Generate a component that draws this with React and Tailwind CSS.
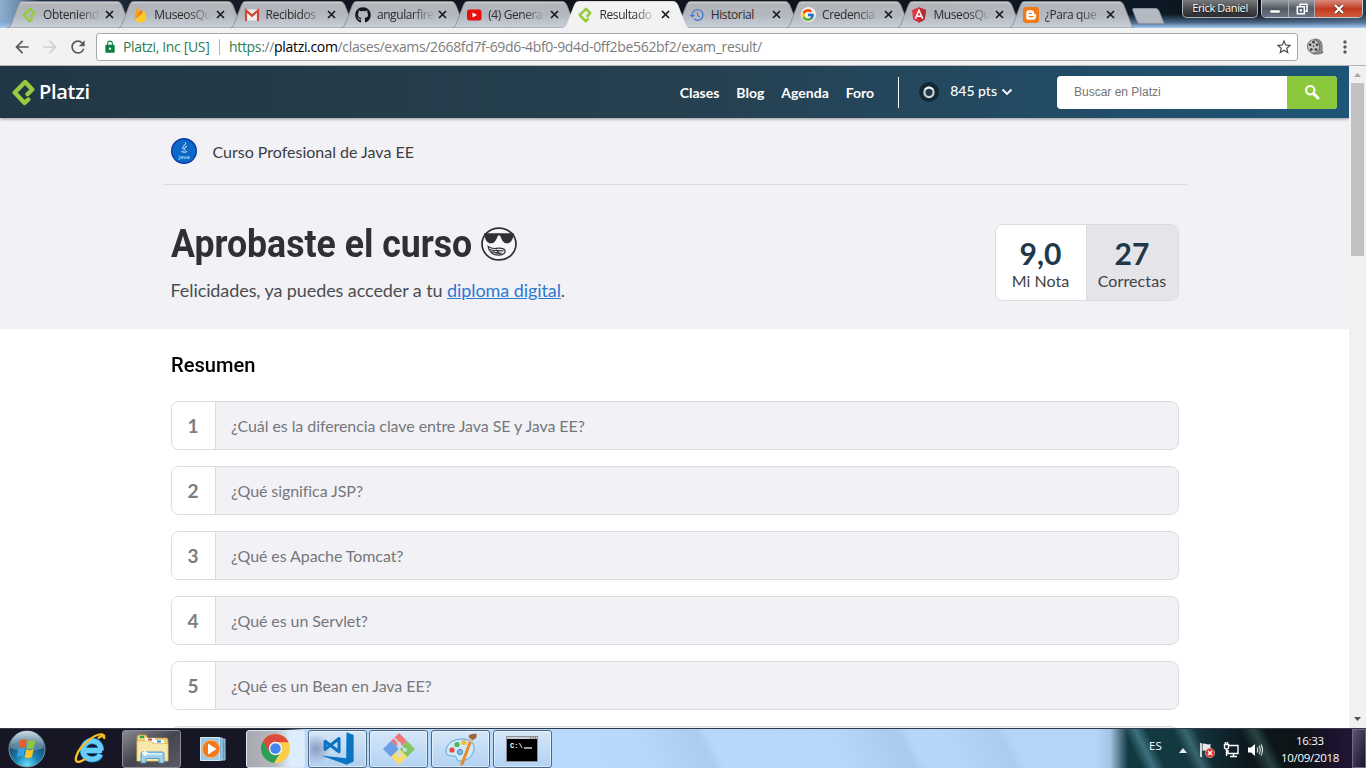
import React from "react";
import { FcGoogle } from "react-icons/fc";
import { FaGithub } from "react-icons/fa";
import { MdHistory, MdArrowBack, MdArrowForward, MdRefresh, MdLock, MdStarBorder, MdMoreVert } from "react-icons/md";

const PlatziMark = ({ className }) => (
  <svg viewBox="0 0 68 80" className={className} fill="none" stroke="#98ca3f" strokeWidth="13" strokeLinecap="round" strokeLinejoin="round">
    <path d="M46 45 60 31 39 9 8 40 37 71 48 61" />
  </svg>
);

const Firebase = () => (
  <svg viewBox="0 0 16 16" className="size-4">
    <path d="M2.5 13 5 .8c.1-.5.6-.5.8-.1l1.800 3.400z" fill="#ffa000" />
    <path d="M2.500 13 8.700 3.200c.2-.4.6-.4.8 0l1.500 2.800z" fill="#f57c00" />
    <path d="m2.500 13 9.600-8.600c.3-.3.7-.2.8.2L14.500 13l-5.500 2.800c-.4.2-.8.2-1.200 0z" fill="#ffca28" />
  </svg>
);

const Gmail = () => (
  <svg viewBox="0 0 16 16" className="size-4">
    <path d="M1 2.500h14v11H1z" fill="#f1eeee" />
    <path d="M2 14V3.500l6 5.200 6-5.200V14" fill="none" stroke="#d14836" strokeWidth="2.200" />
  </svg>
);

const Youtube = () => (
  <svg viewBox="0 0 16 16" className="size-4">
    <rect x="1" y="2.500" width="14.500" height="11" rx="2.500" fill="#e80f0f" />
    <path d="m6.500 5.500 4.500 2.500-4.500 2.500z" fill="#fff" />
  </svg>
);

const Angular = () => (
  <svg viewBox="0 0 16 16" className="size-4">
    <path d="M8 .3 15 3l-1.200 9.500L8 15.800l-5.800-3.300L1 3z" fill="#dd3545" />
    <path d="M8 .3V15.800l5.800-3.300L15 3z" fill="#b52e31" />
    <path d="M4.300 11.700 8 3.300l3.700 8.400M5.800 9.300h4.400" fill="none" stroke="#fff" strokeWidth="1.500" />
  </svg>
);

const Blogger = () => (
  <svg viewBox="0 0 16 16" className="size-4">
    <rect width="16" height="16" rx="3" fill="#ef7a1a" />
    <path d="M6 3.300h2.500c1.600 0 2.600 1 2.600 2.600 0 1.300 1.800.5 1.800 1.700V10c0 1.700-1.100 2.800-2.800 2.800H6A2.700 2.700 0 0 1 3.200 10V6A2.700 2.700 0 0 1 6 3.300z" fill="#fff" />
    <path d="M6.200 6.300h2M6.200 9.700h3.600" stroke="#ef7a1a" strokeWidth="1.300" strokeLinecap="round" />
  </svg>
);

const Close = () => (
  <svg viewBox="0 0 9 9" className="size-[9px] shrink-0">
    <path d="m1 1 7 7M8 1 1 8" stroke="#1b1b1b" strokeWidth="1.700" />
  </svg>
);

const tabs = [
  { title: "Obteniend", icon: <PlatziMark className="h-4 w-4" /> },
  { title: "MuseosQu", icon: <Firebase /> },
  { title: "Recibidos", icon: <Gmail /> },
  { title: "angularfire", icon: <FaGithub className="size-4 text-[#15171b]" /> },
  { title: "(4) Genera", icon: <Youtube /> },
  { title: "Resultado", icon: <PlatziMark className="h-4 w-4" />, active: true },
  { title: "Historial", icon: <MdHistory className="size-4 text-[#3f78c8]" />, whole: true },
  { title: "Credencia", icon: <span className="flex size-[15px] items-center justify-center rounded-full bg-[#eef0f2]"><FcGoogle className="size-[14px]" /></span> },
  { title: "MuseosQu", icon: <Angular /> },
  { title: "¿Para que", icon: <Blogger /> },
];

function Tab({ title, icon, active, whole }) {
  return (
    <div className={`relative -mr-[14px] h-[27px] w-[125.300px] shrink-0 ${active ? "z-10" : ""}`}>
      <svg viewBox="0 0 125 27" preserveAspectRatio="none" className="absolute inset-0 size-full">
        <defs>
          <linearGradient id="tabfill" x1="0" y1="0" x2="0" y2="1">
            <stop offset="0" stopColor="#b3b4b7" />
            <stop offset=".5" stopColor="#b3b7bf" />
            <stop offset="1" stopColor="#c9d0da" />
          </linearGradient>
        </defs>
        <path d="M0 27C3 26 3.500 25 4.500 22L11.500 4Q12.500.5 16 .5H110Q113 .5 114.500 4L121.500 22Q122.500 26 125 27Z" fill={active ? "#f2f2f2" : "url(#tabfill)"} stroke={active ? "#e8e8e8" : "#8b8f96"} strokeWidth=".9" />
        {!active && <path d="M13 1.700H112" stroke="#d0d1d3" strokeWidth="1" />}
      </svg>
      <div className="relative flex h-full items-center pl-[14px]">
        <span className="flex size-4 shrink-0 items-center justify-center">{icon}</span>
        <span className={`ml-[6px] flex w-[58px] shrink-0 whitespace-nowrap text-[12px] leading-[18px] tracking-[-0.4px] text-[#2c2c2c] ${whole ? "" : "[mask-image:linear-gradient(to_right,#000_60%,transparent_100%)]"}`}>{title}</span>
        <span className="ml-[3.500px] flex"><Close /></span>
      </div>
    </div>
  );
}

function WindowButtons() {
  return (
    <div className="absolute top-0 right-[3px] z-20 flex items-start gap-[3px]">
      <div className="flex h-[18px] w-[76px] items-center justify-center rounded-b-[5px] border border-t-0 border-[#aeb3ba] bg-linear-to-b from-[#77797d] via-[#4a4c50] to-[#2b2d30] text-[11px] tracking-[-0.35px] text-white [text-shadow:0_1px_2px_#000]">
        <span className="whitespace-nowrap">Erick Daniel</span>
      </div>
      <div className="flex h-[18px] overflow-hidden rounded-b-[5px] border border-t-0 border-[#c5cad2]">
        <div className="flex w-[27px] items-center justify-center border-r border-[#a5aab3] bg-linear-to-b from-[#9b9fa6] via-[#555b66] to-[#6c7685]">
          <svg viewBox="0 0 12 10" className="h-[10px] w-3"><path d="M1 6h10v3H1z" fill="#fff" stroke="#444" strokeWidth=".5" /></svg>
        </div>
        <div className="flex w-[26px] items-center justify-center border-r border-[#a5aab3] bg-linear-to-b from-[#9b9fa6] via-[#555b66] to-[#6c7685]">
          <svg viewBox="0 0 12 12" className="size-3" fill="none" stroke="#fff" strokeWidth="1.500"><path d="M4 3V1.300h7v7H9" /><path d="M1.300 3.800h7v7h-7z" /><path d="M4 6.600h1.600v1.500H4z" strokeWidth="1" /></svg>
        </div>
        <div className="flex w-[47px] items-center justify-center bg-linear-to-b from-[#d98a7c] via-[#c23a22] to-[#cf5a38]">
          <svg viewBox="0 0 12 10" className="h-[10px] w-3"><path d="m2 1 8 8M10 1 2 9" stroke="#5a2a22" strokeWidth="3.600" /><path d="m2 1 8 8M10 1 2 9" stroke="#fff" strokeWidth="2.400" /></svg>
        </div>
      </div>
    </div>
  );
}

function TabStrip() {
  return (
    <div className="relative flex h-7 items-end bg-[linear-gradient(to_bottom,transparent_50%,rgba(120,165,215,0.55)_80%,#a9cdf2),linear-gradient(to_right,#8fb0cf_0,#6d8db0_18px,#22303f_40px,#111722_20%,#10131c_60%,#0c1a26_83%,#0b1018_92%,#2b3a4c)] pl-[7px]">
      {tabs.map((t, i) => <Tab key={i} {...t} />)}
      <svg viewBox="0 0 34 16" className="mb-1 ml-[12px] h-4 w-[34px] shrink-0">
        <path d="M1.500 .5H24Q26 .5 27 3L32 15.500H8Q6 15.500 5 13L.8 2Q.4.5 1.500.5Z" fill="#b4bac4" stroke="#8d949f" />
      </svg>
      <WindowButtons />
    </div>
  );
}

const Reel = () => (
  <svg viewBox="0 0 18 18" className="h-[17px] w-[18px]">
    <path d="M9 1c5 0 7.500 3 7.500 7v5l1 2.500-4 1.500H7z" fill="#8d8d8d" stroke="#555" strokeWidth=".7" />
    <ellipse cx="7.500" cy="9" rx="6.500" ry="7.200" fill="#c4c4c4" stroke="#4a4a4a" strokeWidth=".8" />
    <g fill="#3c3c3c"><circle cx="7.500" cy="4.400" r="1.400" /><circle cx="3.800" cy="7.200" r="1.400" /><circle cx="11.200" cy="7.200" r="1.400" /><circle cx="5" cy="12.300" r="1.500" /><circle cx="10" cy="12.300" r="1.500" /><circle cx="7.500" cy="8.800" r=".8" /></g>
  </svg>
);

function Toolbar() {
  return (
    <div className="flex h-[38px] items-center border-b border-[#b6b4b6] bg-[#f2f2f2]">
      <MdArrowBack className="ml-[12px] size-5 text-[#5a5a5a]" />
      <MdArrowForward className="ml-2 size-5 text-[#d0d0d0]" />
      <MdRefresh className="ml-2 size-5 text-[#5a5a5a]" />
      <div className="ml-2 flex h-7 w-[1202px] items-center rounded-[3px] border border-[#a9a9a9] bg-white text-[14px]">
        <MdLock className="ml-[6px] size-[14px] text-[#0b8043]" />
        <span className="ml-[6px] w-[88px] whitespace-nowrap tracking-[-0.35px] text-[#2d7d50]">Platzi, Inc [US]</span>
        <span className="ml-[8px] h-4 w-px bg-[#b5b5b5]" />
        <span className="ml-[9px] whitespace-nowrap tracking-[-0.332px] text-[#7d7d7d]"><span className="text-[#2d7d50]">https</span>://<span className="text-black">platzi.com</span>/clases/exams/2668fd7f-69d6-4bf0-9d4d-0ff2be562bf2/exam_result/</span>
        <MdStarBorder className="mr-[4px] ml-auto size-[18px] text-[#4c4c4c]" />
      </div>
      <span className="ml-[8px]"><Reel /></span>
      <MdMoreVert className="ml-[11px] size-5 text-[#5a5a5a]" />
    </div>
  );
}

function SiteHeader() {
  return (
    <header className="relative z-10 flex h-[52px] shrink-0 items-center bg-linear-to-r from-[#213745] via-[#26404f] to-[#1c5577] font-[Lato,sans-serif] text-white shadow-[0_1px_3px_rgba(0,0,0,0.4)]">
      <PlatziMark className="ml-3 h-[27px] w-[23px]" />
      <span className="ml-1 font-['Open_Sans',sans-serif] text-[20px] leading-none font-semibold tracking-[-0.3px]">Platzi</span>
      <nav className="ml-auto flex items-center gap-[17px] pt-px text-[14px] leading-[18px] font-bold">
        {["Clases", "Blog", "Agenda", "Foro"].map((n) => <span key={n}>{n}</span>)}
      </nav>
      <span className="ml-6 h-[31px] w-px bg-white" />
      <svg viewBox="0 0 20 20" className="ml-5 size-5">
        <circle cx="10" cy="10" r="10" fill="#132735" />
        <ellipse cx="10" cy="10.300" rx="4.600" ry="4.800" fill="#22384a" stroke="#c3d6d4" strokeWidth="2.200" />
        <path d="M6 7.500q4-4 8 0" stroke="#eef3ee" strokeWidth="2" fill="none" />
      </svg>
      <span className="mb-[3px] ml-[11px] text-[14px] font-medium">845 pts</span>
      <svg viewBox="0 0 12 8" className="ml-1 h-2 w-3"><path d="m1.500 1.500 4.500 4.500 4.500-4.500" fill="none" stroke="#fff" strokeWidth="1.800" /></svg>
      <div className="mr-3 ml-[44px] flex h-[33px] w-[280px] overflow-hidden rounded-[4px] bg-white">
        <span className="flex-1 pl-[17px] font-['Liberation_Sans',sans-serif] text-[12px] leading-[32px] text-[#757575]">Buscar en Platzi</span>
        <span className="flex w-[50px] items-center justify-center bg-[#8bc83c]">
          <svg viewBox="0 0 16 16" className="size-4" fill="none" stroke="#fff"><circle cx="6.300" cy="6.200" r="4.200" strokeWidth="2.100" /><path d="m9.700 9.700 4.300 4.300" strokeWidth="3" strokeLinecap="round" /></svg>
        </span>
      </div>
    </header>
  );
}

const JavaBadge = () => (
  <svg viewBox="0 0 26 26" className="size-[26px]">
    <circle cx="13" cy="13" r="12.300" fill="#0c68c6" stroke="#0b3aa5" strokeWidth="1.400" />
    <path d="M14.500 4.500c1 2.500-4.500 4-2 7M16 8.300c-3.500 1.700-2.500 2.500-2 4M10.500 13.300c1.500 1.200 4 1 5.500.3" fill="none" stroke="#fff" strokeWidth="1" />
    <text x="13" y="20.500" textAnchor="middle" fontSize="6" fill="#dcecff" fontFamily="Open Sans, sans-serif">java</text>
  </svg>
);

const CoolFace = () => (
  <svg viewBox="0 0 106 100" className="h-[34px] w-[36px]">
    <ellipse cx="53" cy="50" rx="50" ry="47" fill="#f7f7fa" stroke="#2e3033" strokeWidth="5" />
    <path d="M9 18h88l-2 10c-3 13-9 20-18 20-10 0-15-8-20-21q-4-5-8 0C44 40 39 48 29 48c-9 0-16-7-18-20z" fill="#2e3033" />
    <path d="M21 57c7 5 14 7 22 6 12-2 27-1 28 7s-8 13-20 13c-17 0-28-11-30-26z" fill="none" stroke="#2e3033" strokeWidth="3.500" />
    <path d="M25 66c11 5 24 2 41 4M31 72c10 3 16 7 30 5M44 67l12 12" fill="none" stroke="#2e3033" strokeWidth="3.500" />
  </svg>
);

const questions = [
  "¿Cuál es la diferencia clave entre Java SE y Java EE?",
  "¿Qué significa JSP?",
  "¿Qué es Apache Tomcat?",
  "¿Qué es un Servlet?",
  "¿Qué es un Bean en Java EE?",
];

function Results() {
  return (
    <main className="flex-1 font-[Lato,sans-serif]">
      <section className="h-[211px] bg-[#f2f1f6]">
        <div className="mx-auto w-[1024px]">
          <div className="flex h-[67px] items-center border-b border-[#dcdbe0] px-2">
            <JavaBadge />
            <span className="mt-[2px] ml-4 text-[16px] text-[#3b3e42]">Curso Profesional de Java EE</span>
          </div>
          <div className="flex justify-between px-2 pt-[39px]">
            <div>
              <h1 className="flex h-[39px] items-center gap-[9px] font-[Roboto,sans-serif] text-[38px] leading-none font-bold text-[#2e3033]">
                <span className="w-[301px] whitespace-nowrap"><span className="inline-block origin-left scale-x-[0.938]">Aprobaste el curso</span></span>
                <CoolFace />
              </h1>
              <p className="mt-[14px] text-[18px] leading-[27px] tracking-[-0.085px] text-[#4a4d50]">Felicidades, ya puedes acceder a tu <span className="text-[#2a78d2] underline">diploma digital</span>.</p>
            </div>
            <div className="flex h-[77px] w-[184px] overflow-hidden rounded-[8px] border border-[#dcdbe0] text-center text-[16px] text-[#3f4245]">
              <div className="w-[91px] border-r border-[#dcdbe0] bg-white pt-[11px]">
                <div className="text-[30px] leading-[34px] font-bold text-[#20384a]">9,0</div>
                <div className="mt-px leading-[20px]">Mi Nota</div>
              </div>
              <div className="flex-1 bg-[#e5e4e9] pt-[11px]">
                <div className="text-[30px] leading-[34px] font-bold text-[#20384a]">27</div>
                <div className="mt-px leading-[20px] tracking-[0.1px]">Correctas</div>
              </div>
            </div>
          </div>
        </div>
      </section>
      <section className="mx-auto w-[1008px] pt-[22px]">
        <h2 className="font-[Roboto,sans-serif] text-[21px] leading-[28px] font-medium text-black"><span className="inline-block origin-left scale-x-[0.957]">Resumen</span></h2>
        <ol className="mt-[22px] flex flex-col gap-4">
          {questions.map((q, i) => (
            <li key={q} className="flex h-[49px] shrink-0 overflow-hidden rounded-[8px] border border-[#dcdbe0] bg-[#f2f1f6]">
              <span className="flex w-[44px] items-center justify-center border-r border-[#dcdbe0] bg-white pt-px text-[19px] font-bold text-[#7b7d80]">{i + 1}</span>
              <span className="flex items-center pl-[15.500px] text-[16px] tracking-[-0.08px] text-[#75777a]">{q}</span>
            </li>
          ))}
          <li className="h-[49px] rounded-[8px] border border-[#dcdbe0] bg-[#f2f1f6]" />
        </ol>
      </section>
    </main>
  );
}

function Scrollbar() {
  return (
    <div className="flex w-[17px] shrink-0 flex-col items-center bg-[#f1f1f1]">
      <svg viewBox="0 0 17 17" className="size-[17px]"><path d="M5 11h7L8.500 7z" fill="#a5a5a5" /></svg>
      <div className="h-[173px] w-[13px] bg-[#c1c1c1]" />
      <svg viewBox="0 0 17 17" className="mt-auto size-[17px]"><path d="M5 6h7L8.500 10z" fill="#505050" /></svg>
    </div>
  );
}

const StartOrb = () => (
  <svg viewBox="0 0 38 38" className="size-[38px]">
    <defs>
      <radialGradient id="orb" cx=".5" cy=".95" r=".9"><stop offset="0" stopColor="#6fe0fb" /><stop offset=".35" stopColor="#1b86b8" /><stop offset=".75" stopColor="#1c4a6d" /><stop offset="1" stopColor="#4e738c" /></radialGradient>
      <linearGradient id="orbshine" x1="0" y1="0" x2="0" y2="1"><stop offset="0" stopColor="#dfeaf0" stopOpacity=".85" /><stop offset="1" stopColor="#8fb3c8" stopOpacity=".35" /></linearGradient>
    </defs>
    <circle cx="19" cy="19" r="18" fill="url(#orb)" stroke="#7896a8" strokeWidth="1" />
    <path d="M2 18a17 17 0 0 1 34 0c-8 4-26 4-34 0z" fill="url(#orbshine)" />
    <path d="M12.500 10c2-1 4-1.200 6.300-.2l-1.600 8c-2.200-1-4.200-1-6.500.3z" fill="#ee5a24" />
    <path d="M20 10.300c2.500 1 4.700 1 7.500-.6l-1.700 8.200c-2.600 1.400-4.800 1.400-7.400.4z" fill="#8cc63f" />
    <path d="M10.500 19.300c2.300-1.100 4.200-1.200 6.400-.3l-1.600 7.700c-2.200-.9-4.200-.8-6.500.4z" fill="#38a3e4" />
    <path d="M18.200 19.500c2.500 1 4.800 1 7.400-.5L24 27c-2.600 1.400-4.800 1.200-7.400.3z" fill="#fcc629" />
  </svg>
);

const InternetExplorer = () => (
  <svg viewBox="0 0 32 32" className="size-8" fill="none">
    <path d="M27 17.500H10.500M27 17.500c0-6-4-9.500-9-9.500s-9 4-9 9.300 4 9 9 9c4 0 7-1.800 8.500-5" stroke="#1579c9" strokeWidth="6.500" />
    <path d="M28 17.500H10.500M27 17.500c0-6-4-9.500-9-9.500s-9 4-9 9.300 4 9 9 9c4 0 7-1.800 8.500-5" stroke="#68cdf8" strokeWidth="5" />
    <path d="M24 5.500C27 2 31 2 30 6M7.500 14C2.500 20 .5 27 2.800 28.500c2 1.300 5-.3 8.200-2.500" stroke="#f5bd27" strokeWidth="2.400" />
    <path d="M7.500 14C13 8 19 3 25 1.500c3-.6 5 0 5.500 2" stroke="#f5bd27" strokeWidth="2" />
  </svg>
);

const Explorer = () => (
  <svg viewBox="0 0 34 32" className="h-8 w-[34px]">
    <path d="M2 4Q2 2 4 2h7l2 3h18q2 0 2 2v21H2z" fill="#e7cf7c" stroke="#bb9d45" strokeWidth=".8" />
    <path d="M10 5h10v4H10zM19 7h10v4H19z" fill="#fff" />
    <path d="M5 3h4v2H5z" fill="#23a745" /><path d="M13 5.500h4v2h-4z" fill="#d5462f" /><path d="M22 7.500h4v2h-4z" fill="#2f8be0" />
    <path d="M2 8h14l2 2.500h15V28H2z" fill="#f8e8a9" stroke="#d0b55e" strokeWidth=".6" />
    <path d="M6 30V20.500Q6 19 8 19h19q2 0 2 1.500V30h-5v-4.500H11V30z" fill="#9bd0ee" stroke="#4b94c4" strokeWidth=".9" />
    <path d="M8 21h19" stroke="#e6f6ff" strokeWidth="1.500" />
    <path d="M10 17v6M7 20h6" stroke="#fff" strokeWidth="1.400" />
  </svg>
);

const MediaPlayer = () => (
  <svg viewBox="0 0 28 28" className="size-7">
    <path d="M7 4h19v21H7z" fill="#5d97bd" stroke="#a8cfe5" /><path d="M4 3h19v22H4z" fill="#74aacd" stroke="#b9dbee" /><path d="M1.500 2.500h19v23h-19z" fill="#9ccae4" stroke="#d3ebf7" />
    <circle cx="12" cy="14" r="8.800" fill="#ef7b1d" stroke="#f9ba79" strokeWidth="1" />
    <path d="m9 8.500 8.500 5.500L9 19.500z" fill="#fff" />
  </svg>
);

const Chrome = () => (
  <svg viewBox="0 0 32 32" className="size-[31px]">
    <circle cx="16" cy="16" r="15" fill="#fccd48" />
    <path d="M16 16 3 8.500A15 15 0 0 0 14.500 31L21.500 19z" fill="#2f9e57" />
    <path d="M3 8.500A15 15 0 0 1 29.500 9.500H16L9.800 19.500z" fill="#dc4b3e" />
    <circle cx="16" cy="16" r="6.900" fill="#f5f5f5" /><circle cx="16" cy="16" r="5.400" fill="#4585f0" />
  </svg>
);

const VSCode = () => (
  <svg viewBox="0 0 97 97" className="size-[33px]">
    <path d="M75 1 96 9v78l-21 9L0 69l74 8z" fill="#0b74c2" />
    <path d="M12 27 53 58V19L12 51z" fill="none" stroke="#0b74c2" strokeWidth="9" strokeLinejoin="round" />
  </svg>
);

const Git = () => (
  <svg viewBox="0 0 34 34" className="size-[34px]">
    <path d="M17 1 25 9l-5 5h-6L9 9z" fill="#f17878" /><path d="m25 9 8 8-8 8-7-8z" fill="#83c65c" />
    <path d="m9 9 8 8-8 8-8-8z" fill="#6c9ee8" /><path d="m17 17 8 8-8 8-8-8z" fill="#fadb6b" />
    <path d="M12 6l5 5v14M17 12l6 6" stroke="#c7def5" strokeWidth="1.700" fill="none" /><circle cx="17" cy="12" r="2.100" fill="#c7def5" /><circle cx="23" cy="18" r="2.100" fill="#c7def5" /><circle cx="17" cy="23" r="2.100" fill="#c7def5" />
  </svg>
);

const Paint = () => (
  <svg viewBox="0 0 34 34" className="size-[34px]">
    <path d="M18 7c9 0 13 5 12 11s-7 11-14 11c-5 0-2-5-6-5s-8 0-8-5c0-7 7-12 16-12z" fill="#cfe9f6" stroke="#5aa5cd" />
    <circle cx="8" cy="18" r="2.600" fill="#e2493f" /><circle cx="13" cy="12.500" r="2.600" fill="#52b455" /><circle cx="20" cy="10.500" r="2.600" fill="#f3b93a" /><circle cx="16" cy="20" r="2.600" fill="#7fb9e4" stroke="#4686bd" />
    <path d="M27 8 18 32" stroke="#e8892b" strokeWidth="3" strokeLinecap="round" /><path d="M28.500 6 27 10" stroke="#c6c6c6" strokeWidth="4" />
    <path d="M24.500 5c0-3 5-4 8-3 1 3-1 5-4 6z" fill="#a0683a" />
  </svg>
);

const Cmd = () => (
  <svg viewBox="0 0 32 26" className="h-[26px] w-8">
    <rect x=".5" y=".5" width="31" height="25" fill="#000" stroke="#8a8f94" /><path d="M1 1h30v2H1z" fill="#c9cdd1" />
    <path d="M24 2h1M26.500 2h1M29 2h1" stroke="#333" />
    <text x="4" y="12" fontSize="7" fontWeight="700" fill="#fff" fontFamily="Liberation Mono, monospace">C:\</text><path d="M18 12h8" stroke="#fff" strokeWidth="1.200" />
  </svg>
);

const lightButton = "border-[#4e6885] shadow-[inset_0_0_0_1px_rgba(255,255,255,0.5)] bg-linear-to-b from-[#d5e6f8] to-[#b2d2f3]";

const apps = [
  { icon: <InternetExplorer />, style: "border-transparent" },
  { icon: <Explorer />, style: "border-[#8c8c96] bg-linear-to-br from-[#8a8a92] via-[#45454f] to-[#5c5c66]" },
  { icon: <MediaPlayer />, style: "border-transparent" },
  { icon: <Chrome />, style: "border-[#dce6ef] bg-linear-to-r from-[#a9a9b0] via-[#b5b8c0] via-50% to-[#dcedfc] to-75%" },
  { icon: <VSCode />, style: "border-[#4e6885] shadow-[inset_0_0_0_1px_rgba(255,255,255,0.5)] bg-[radial-gradient(circle_at_12%_50%,#8b9bc0,transparent_28%),linear-gradient(to_bottom,#d5e6f8,#b0cfef)]" },
  { icon: <Git />, style: lightButton },
  { icon: <Paint />, style: lightButton },
  { icon: <Cmd />, style: lightButton },
];

function Taskbar() {
  return (
    <footer className="flex h-10 shrink-0 items-stretch border-t border-[#34394a] bg-[linear-gradient(to_right,#171624_0,#171624_285px,#b7d9fb_303px,#b7d9fb_600px,transparent_600px)] text-white">
      <div className="flex w-[1096px] shrink-0 items-center bg-[linear-gradient(62deg,transparent_58%,rgba(160,190,225,0.45)_64%,transparent_65%,transparent_76%,rgba(160,190,225,0.5)_82%,transparent_83%,transparent_86%,rgba(160,190,225,0.4)_91%,transparent_92%),linear-gradient(to_right,transparent_560px,#b7d9fb_600px,#b3d5f8)]">
        <div className="flex w-[59px] justify-center pr-[5px]"><StartOrb /></div>
        {apps.map((a, i) => (
          <div key={i} className="flex w-[61.800px] shrink-0 justify-center">
            <div className={`flex h-[38px] w-[59px] items-center justify-center rounded-[3px] border ${a.style}`}>{a.icon}</div>
          </div>
        ))}
      </div>
      <div className="flex flex-1 items-center bg-[linear-gradient(64deg,transparent_16%,rgba(90,150,165,0.6)_20%,transparent_24%,transparent_33%,rgba(90,140,150,0.55)_37%,transparent_41%,transparent_56%,rgba(70,110,100,0.5)_61%,transparent_65%),linear-gradient(to_right,#b3d5f8_0,#a4c6e4_14px,#123a42_32px,#14383f_35%,#0c1820_55%,#0d1416_75%,#1d1230_90%,#241a35)]">
        <span className="mb-[6px] ml-[53px] w-[16px] text-[11.500px] leading-none">ES</span>
        <svg viewBox="0 0 8 5" className="mt-1 ml-[14px] h-[5px] w-2"><path d="M0 5h8L4 0z" fill="#e9eef0" /></svg>
        <svg viewBox="0 0 16 16" className="mt-[2px] ml-3 size-4"><path d="M2 1v14" stroke="#fff" strokeWidth="1.600" /><path d="M3.500 2c3-1.500 4 1.500 8 0v7c-4 1.500-5-1.500-8 0z" fill="#e8e8e8" /><circle cx="11" cy="11" r="4.700" fill="#d9362b" stroke="#f3b5ae" strokeWidth=".6" /><path d="m9 9 4 4M13 9l-4 4" stroke="#fff" strokeWidth="1.600" /></svg>
        <svg viewBox="0 0 16 16" className="mt-[2px] ml-2 size-4" fill="none" stroke="#fff" strokeWidth="1.400"><path d="M6 3.500h9v8H5V8M7 14.500h7M10.500 12v2M1.500 2.500h4v3.500l-2 1.500-2-1.500zM2.500 0v2M4.500 0v2M3.500 8v6" /></svg>
        <svg viewBox="0 0 16 16" className="mt-[2px] ml-2 size-4"><path d="M1 5.500h3L8 2v12l-4-3.500H1z" fill="#fff" /><path d="M10 5.500q1.500 2.500 0 5M12 3.800q2.500 4.200 0 8.400M14 2.500q3 5.500 0 11" stroke="#dfe7e7" fill="none" strokeWidth="1.100" /></svg>
        <div className="mr-[13px] ml-auto flex flex-col items-center text-[11.500px] leading-[17px] tracking-[-0.3px]"><span>16:33</span><span>10/09/2018</span></div>
        <div className="h-full w-[14px] border border-[#70697f] bg-linear-to-br from-[#5d5573] to-[#1b1429]" />
      </div>
    </footer>
  );
}

export default function App() {
  return (
    <div className="flex h-[768px] w-[1366px] flex-col overflow-hidden bg-white font-['Open_Sans',sans-serif]">
      <TabStrip />
      <Toolbar />
      <div className="flex min-h-0 flex-1">
        <div className="flex w-[1349px] flex-col overflow-hidden">
          <SiteHeader />
          <Results />
        </div>
        <Scrollbar />
      </div>
      <Taskbar />
    </div>
  );
}
